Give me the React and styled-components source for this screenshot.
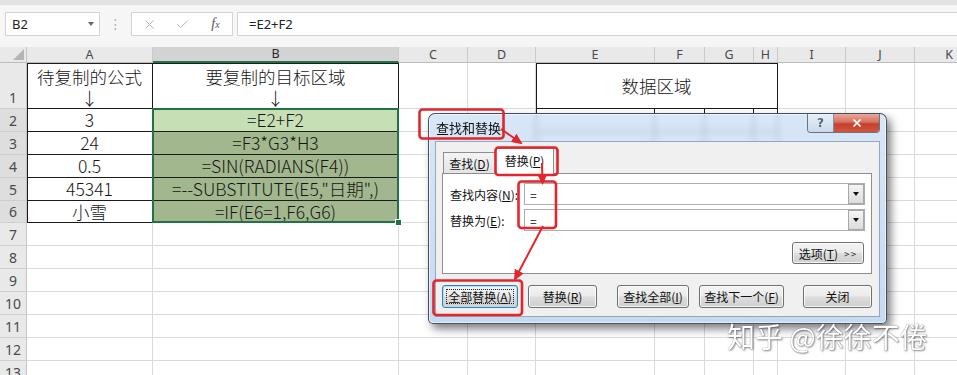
import React from 'react';
import styled, { createGlobalStyle, css } from 'styled-components';
import { X, Check } from 'lucide-react';

const GlobalStyle = createGlobalStyle`
  html, body { margin: 0; padding: 0; background: #fff; }
  body { font-family: "Noto Sans CJK SC", "Noto Sans", sans-serif; }
  #root { width: 957px; height: 375px; }
`;

const Page = styled.div`
  position: relative;
  width: 957px;
  height: 375px;
  overflow: hidden;
  background: #fff;
`;

/* ---------- formula bar ---------- */
const FormulaBar = styled.div`
  box-sizing: border-box;
  height: 47px;
  background: #f6f6f6;
  border-top: 5px solid #e2e2e2;
  padding: 7px 0 0 5px;
  display: flex;
  align-items: flex-start;
`;

const NameBox = styled.div`
  box-sizing: border-box;
  width: 95px;
  height: 24px;
  background: #fff;
  border: 1px solid #d4d4d4;
  display: flex;
  align-items: center;
  justify-content: space-between;
  padding: 0 5px 0 6px;
  font: 13px "Noto Sans", sans-serif;
  color: #222;
`;

const Caret = styled.span`
  width: 0;
  height: 0;
  border-left: 3.5px solid transparent;
  border-right: 3.5px solid transparent;
  border-top: 4px solid #666;
`;

const Grip = styled.div`
  width: 31px;
  height: 24px;
  display: flex;
  align-items: center;
  justify-content: center;
  color: #b0b0b0;
  font: 14px "DejaVu Sans", sans-serif;
`;

const FxBox = styled.div`
  box-sizing: border-box;
  width: 102px;
  height: 24px;
  background: #fff;
  border: 1px solid #d4d4d4;
  display: grid;
  grid-template-columns: 34px 33px 33px;
  align-items: center;
  justify-items: center;
`;

const FxText = styled.span`
  font: italic 14px "Liberation Serif", serif;
  color: #555;
  & > small { font-size: 10px; }
`;

const FormulaInput = styled.div`
  box-sizing: border-box;
  flex: 1;
  margin-left: 4px;
  height: 24px;
  background: #fff;
  border: 1px solid #d4d4d4;
  border-right: none;
  display: flex;
  align-items: center;
  padding-left: 11px;
  font: 13px "Noto Sans", sans-serif;
  color: #222;
`;

/* ---------- sheet ---------- */
const Sheet = styled.div`
  display: grid;
  grid-template-columns: 27px 126px 246px 69px 68px 119px 50px 49px 24px 68px 69px 69px;
  grid-template-rows: 16px 46px 23px 23px 23px 23px 22px repeat(7, 23px);
`;

const Corner = styled.div`
  grid-row: 1;
  grid-column: 1;
  position: relative;
  box-sizing: border-box;
  background: #e9e9e9;
  border-right: 1px solid #c6c6c6;
  border-bottom: 1px solid #bdbdbd;
  &::after {
    content: "";
    position: absolute;
    right: 2px;
    bottom: 2px;
    width: 0;
    height: 0;
    border-left: 11px solid transparent;
    border-bottom: 11px solid #b5b5b5;
  }
`;

const ColHead = styled.div`
  grid-row: 1;
  grid-column: ${p => p.$col};
  box-sizing: border-box;
  background: ${p => (p.$sel ? '#d3d3d3' : '#e9e9e9')};
  border-right: 1px solid #cacaca;
  border-bottom: ${p => (p.$sel ? '2px solid #217346' : '1px solid #bdbdbd')};
  display: flex;
  align-items: center;
  justify-content: center;
  font: 12.5px "Noto Sans", sans-serif;
  line-height: 14px;
  color: ${p => (p.$sel ? '#2a2a2a' : '#4a4a4a')};
`;

const RowHead = styled.div`
  grid-row: ${p => p.$row};
  grid-column: 1;
  box-sizing: border-box;
  background: ${p => (p.$sel ? '#dedede' : '#e9e9e9')};
  border-right: 1px solid #c6c6c6;
  border-bottom: 1px solid #cfcfcf;
  display: flex;
  justify-content: center;
  align-items: ${p => (p.$bottom ? 'flex-end' : 'center')};
  padding-bottom: ${p => (p.$bottom ? '2px' : '0')};
  font: 14px "Noto Sans", sans-serif;
  line-height: 17px;
  color: #4a4a4a;
  overflow: hidden;
`;

const edgeShadow = (l, t) => {
  if (!l && !t) return 'none';
  return `inset ${l ? 1 : 0}px ${t ? 1 : 0}px 0 #1b1b1b`;
};

const Cell = styled.div`
  grid-row: ${p => p.$row};
  grid-column: ${p => p.$col} / span ${p => p.$span || 1};
  box-sizing: border-box;
  border-right: 1px solid ${p => (p.$boxed ? '#1b1b1b' : '#dadada')};
  border-bottom: 1px solid ${p => (p.$boxed ? '#1b1b1b' : '#dadada')};
  box-shadow: ${p => edgeShadow(p.$left, p.$top)};
  background: ${p => p.$fill || '#fff'};
  display: flex;
  flex-direction: column;
  align-items: center;
  justify-content: ${p => (p.$multi ? 'flex-start' : 'center')};
  padding-top: ${p => (p.$multi ? '3px' : '0')};
  font-size: 17.5px;
  font-weight: 300;
  line-height: ${p => (p.$multi ? '21px' : '20px')};
  color: #161616;
  white-space: nowrap;
  overflow: hidden;
`;

const Selection = styled.div`
  grid-row: 3 / 8;
  grid-column: 3;
  position: relative;
  margin: -1px 0 0 -1px;
  border: 2px solid #217346;
  pointer-events: none;
  z-index: 1;
`;

const FillHandle = styled.span`
  position: absolute;
  right: -5px;
  bottom: -5px;
  width: 5px;
  height: 5px;
  background: #217346;
  border: 1px solid #fff;
`;

/* ---------- dialog ---------- */
const Dialog = styled.div`
  position: absolute;
  left: 428px;
  top: 113px;
  width: 459px;
  height: 211px;
  box-sizing: border-box;
  border: 1px solid rgba(35, 45, 65, 0.8);
  border-radius: 7px 7px 5px 5px;
  background: linear-gradient(180deg, rgba(200, 222, 244, 0.72), rgba(182, 208, 236, 0.78));
  backdrop-filter: blur(3px);
  box-shadow: 4px 5px 9px rgba(0, 0, 0, 0.5), inset 0 0 0 1px rgba(255, 255, 255, 0.55);
  display: flex;
  flex-direction: column;
  padding: 0 6px 6px 6px;
  font-family: "Noto Sans CJK SC", sans-serif;
  font-size: 12px;
  color: #111;
  z-index: 3;
`;

const TitleBar = styled.div`
  height: 27px;
  display: flex;
  align-items: flex-start;
`;

const Title = styled.div`
  padding: 5px 0 0 1px;
  font-size: 13px;
  line-height: 18px;
  color: #101010;
`;

const TitleButtons = styled.div`
  margin-left: auto;
  display: flex;
  height: 18px;
  border: 1px solid rgba(50, 55, 75, 0.65);
  border-top: none;
  border-radius: 0 0 4px 4px;
  overflow: hidden;
`;

const HelpBtn = styled.div`
  width: 25px;
  display: flex;
  align-items: center;
  justify-content: center;
  background: linear-gradient(180deg, rgba(235, 243, 250, 0.8), rgba(196, 214, 232, 0.8));
  border-right: 1px solid rgba(50, 55, 75, 0.5);
  font: bold 12px "DejaVu Sans", sans-serif;
  color: #5a6570;
`;

const CloseBtn = styled.div`
  width: 45px;
  display: flex;
  align-items: center;
  justify-content: center;
  background: linear-gradient(180deg, #e9a99c 0%, #d6715f 45%, #c4412c 55%, #d0563f 100%);
`;

const Client = styled.div`
  flex: 1;
  box-sizing: border-box;
  background: #f0f0f0;
  border: 1px solid #93a7c1;
  display: flex;
  flex-direction: column;
  padding: 6px 7px 0 6px;
`;

const TabStrip = styled.div`
  height: 25px;
  display: flex;
  align-items: flex-end;
  padding-left: 1px;
  position: relative;
  z-index: 1;
`;

const Tab = styled.div`
  box-sizing: border-box;
  display: flex;
  align-items: center;
  justify-content: center;
  border: 1px solid #8c8e94;
  border-bottom: none;
  ${p =>
    p.$active
      ? css`
          width: 59px;
          height: 26px;
          margin-bottom: -1px;
          margin-left: -1px;
          background: #fff;
          padding-bottom: 2px;
        `
      : css`
          width: 53px;
          height: 21px;
          background: linear-gradient(180deg, #f4f4f4, #e3e3e3);
        `}
`;

const Pane = styled.div`
  box-sizing: border-box;
  height: 101px;
  background: #fff;
  border: 1px solid #8c8e94;
  padding: 9px 6px 0 7px;
  display: flex;
  flex-direction: column;
`;

const FieldGrid = styled.div`
  display: grid;
  grid-template-columns: 74px 1fr;
  grid-auto-rows: 22px;
  row-gap: 4px;
  align-items: center;
`;

const Combo = styled.div`
  box-sizing: border-box;
  height: 22px;
  border: 1px solid #abadb3;
  background: #fff;
  display: flex;
  align-items: center;
  padding-left: 5px;
`;

const DropBtn = styled.div`
  box-sizing: border-box;
  margin-left: auto;
  width: 16px;
  height: 20px;
  border: 1px solid #a7a7a7;
  background: linear-gradient(180deg, #f5f5f5, #dcdcdc);
  display: flex;
  align-items: center;
  justify-content: center;
  &::after {
    content: "";
    width: 0;
    height: 0;
    border-left: 3.5px solid transparent;
    border-right: 3.5px solid transparent;
    border-top: 4px solid #111;
  }
`;

const OptionsRow = styled.div`
  display: flex;
  justify-content: flex-end;
  margin-top: 11px;
  padding-right: 1px;
`;

const Btn = styled.div`
  box-sizing: border-box;
  width: ${p => p.$w}px;
  height: ${p => p.$h || 23}px;
  margin-left: ${p => p.$ml || 0}px;
  border: 1px solid ${p => (p.$default ? '#3c7fb1' : '#707070')};
  border-radius: 3px;
  background: linear-gradient(180deg, #f3f3f3 0%, #ebebeb 48%, #dddddd 52%, #cfcfcf 100%);
  box-shadow: inset 0 0 0 1px ${p => (p.$default ? '#a9e2f7' : 'rgba(255,255,255,0.75)')};
  display: flex;
  align-items: center;
  justify-content: center;
  font-size: 12px;
  color: #111;
  white-space: nowrap;
`;

const FocusRect = styled.span`
  display: flex;
  align-items: center;
  justify-content: center;
  width: calc(100% - 8px);
  height: calc(100% - 8px);
  outline: 1px dotted #222;
`;

const ButtonRow = styled.div`
  display: flex;
  margin-top: 11px;
`;

const Arrows = styled.span`
  margin-left: 6px;
  font-size: 10px;
  letter-spacing: 1px;
  color: #333;
`;

/* ---------- overlays ---------- */
const Annotations = styled.svg`
  position: absolute;
  left: 0;
  top: 0;
  width: 957px;
  height: 375px;
  pointer-events: none;
  z-index: 5;
`;

const Watermark = styled.div`
  position: absolute;
  left: 727px;
  top: 318px;
  font-size: 28px;
  line-height: 36px;
  color: #fff;
  white-space: nowrap;
  text-shadow: 0 0 1px rgba(0, 0, 0, 0.6), 1px 1px 2px rgba(0, 0, 0, 0.45);
  z-index: 6;
`;

/* ---------- data ---------- */
const COLS = ['A', 'B', 'C', 'D', 'E', 'F', 'G', 'H', 'I', 'J', 'K'];

const VALUES = {
  A1: ['待复制的公式', '↓'],
  B1: ['要复制的目标区域', '↓'],
  E1: ['数据区域'],
  A2: ['3'], B2: ['=E2+F2'],
  A3: ['24'], B3: ['=F3*G3*H3'],
  A4: ['0.5'], B4: ['=SIN(RADIANS(F4))'],
  A5: ['45341'], B5: ['=--SUBSTITUTE(E5,"日期",)'],
  A6: ['小雪'], B6: ['=IF(E6=1,F6,G6)'],
};

function buildCells() {
  const cells = [];
  for (let r = 1; r <= 13; r++) {
    for (let c = 0; c < COLS.length; c++) {
      const col = COLS[c];
      if (r === 1 && (col === 'F' || col === 'G' || col === 'H')) continue;
      const key = col + r;
      const inAB = c <= 1 && r <= 6;
      const inEH = c >= 4 && c <= 7 && r <= 6;
      const boxed = inAB || inEH;
      let fill;
      if (col === 'B' && r === 2) fill = '#c6dfb4';
      else if (col === 'B' && r >= 3 && r <= 6) fill = '#a2b78e';
      const lines = VALUES[key];
      cells.push(
        <Cell
          key={key}
          $row={r + 1}
          $col={c + 2}
          $span={r === 1 && col === 'E' ? 4 : 1}
          $boxed={boxed}
          $left={(inAB && c === 0) || (inEH && c === 4)}
          $top={boxed && r === 1}
          $fill={fill}
          $multi={lines && lines.length > 1}
        >
          {lines && lines.map((t, i) => <span key={i}>{t}</span>)}
        </Cell>
      );
    }
  }
  return cells;
}

export default function App() {
  return (
    <Page>
      <GlobalStyle />
      <FormulaBar>
        <NameBox>
          <span>B2</span>
          <Caret />
        </NameBox>
        <Grip>⋮</Grip>
        <FxBox>
          <X size={15} color="#b4b4b4" strokeWidth={1.6} />
          <Check size={15} color="#b4b4b4" strokeWidth={1.6} />
          <FxText>f<small>x</small></FxText>
        </FxBox>
        <FormulaInput>=E2+F2</FormulaInput>
      </FormulaBar>

      <Sheet>
        <Corner />
        {COLS.map((c, i) => (
          <ColHead key={c} $col={i + 2} $sel={c === 'B'}>{c}</ColHead>
        ))}
        {Array.from({ length: 13 }, (_, i) => (
          <RowHead key={i} $row={i + 2} $bottom={i === 0} $sel={i >= 1 && i <= 5}>{i + 1}</RowHead>
        ))}
        {buildCells()}
        <Selection>
          <FillHandle />
        </Selection>
      </Sheet>

      <Dialog>
        <TitleBar>
          <Title>查找和替换</Title>
          <TitleButtons>
            <HelpBtn>?</HelpBtn>
            <CloseBtn>
              <X size={12} color="#fff" strokeWidth={3.4} />
            </CloseBtn>
          </TitleButtons>
        </TitleBar>
        <Client>
          <TabStrip>
            <Tab>查找(<u>D</u>)</Tab>
            <Tab $active>替换(<u>P</u>)</Tab>
          </TabStrip>
          <Pane>
            <FieldGrid>
              <span>查找内容(<u>N</u>):</span>
              <Combo>=<DropBtn /></Combo>
              <span>替换为(<u>E</u>):</span>
              <Combo>=<DropBtn /></Combo>
            </FieldGrid>
            <OptionsRow>
              <Btn $w={72} $h={22}>选项(<u>T</u>)<Arrows>&gt;&gt;</Arrows></Btn>
            </OptionsRow>
          </Pane>
          <ButtonRow>
            <Btn $w={76} $default>
              <FocusRect>全部替换(<u>A</u>)</FocusRect>
            </Btn>
            <Btn $w={69} $ml={10}>替换(<u>R</u>)</Btn>
            <Btn $w={72} $ml={20}>查找全部(<u>I</u>)</Btn>
            <Btn $w={85} $ml={10}>查找下一个(<u>F</u>)</Btn>
            <Btn $w={69} $ml={19}>关闭</Btn>
          </ButtonRow>
        </Client>
      </Dialog>

      <Annotations viewBox="0 0 957 375">
        <defs>
          <marker id="ah" markerWidth="11" markerHeight="10" refX="9" refY="5" orient="auto" markerUnits="userSpaceOnUse">
            <path d="M0,0 L11,5 L0,10 z" fill="#e3262b" />
          </marker>
        </defs>
        <g fill="none" stroke="#e3262b" strokeWidth="2.6">
          <rect x="419.5" y="109.5" width="84" height="29" rx="3" />
          <rect x="495.5" y="147.5" width="62" height="27.5" rx="3" />
          <rect x="518.5" y="181.5" width="37.5" height="46.5" rx="3" />
          <rect x="433.5" y="280.5" width="88.5" height="34.5" rx="3" />
          <line x1="501" y1="129" x2="521" y2="143" markerEnd="url(#ah)" strokeWidth="2" />
          <line x1="542" y1="163" x2="542.5" y2="183" markerEnd="url(#ah)" strokeWidth="2" />
          <line x1="543" y1="226" x2="515" y2="279" markerEnd="url(#ah)" strokeWidth="2" />
        </g>
      </Annotations>

      <Watermark>知乎 @徐徐不倦</Watermark>
    </Page>
  );
}
